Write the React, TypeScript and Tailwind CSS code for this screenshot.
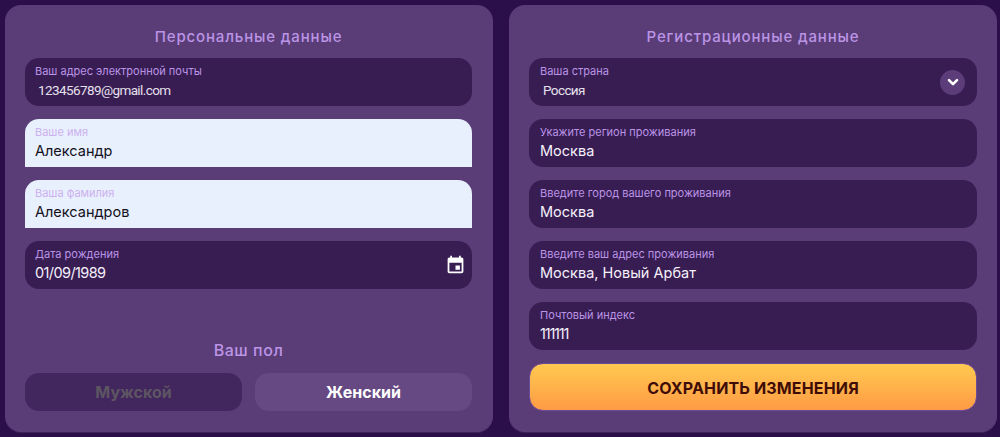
import React from "react";

function Field({ label, value, light, mono, right, valueClass, wide }: { label: string; value: string; light?: boolean; mono?: boolean; right?: React.ReactNode; valueClass?: string; wide?: boolean }) {
  return (
    <div
      className={
        "relative h-[48px] shrink-0 " + (wide ? "px-[11px] " : "px-[10px] ") +
        (light ? "bg-[#e8f0fe] rounded-t-[14px] " : "bg-[#381d53] rounded-[14px] ")
      }
    >
      <div className={"pt-[5px] text-[11px] leading-[16px] " + (light ? "text-[#cdb0ee]" : "text-[#bb94e6]")}>{label}</div>
      <div
        className={
          "mt-[1px] leading-[20px] whitespace-nowrap " +
          (mono
            ? "pl-[3px] text-[13.5px] tracking-[-0.6px] text-[#e6e0ec] font-['Roboto',sans-serif]"
            : "text-[14.5px] " + (valueClass ?? "") + " " + (light ? "text-[#14101c]" : "text-[#f5f0fa]"))
        }
      >
        {value}
      </div>
      {right}
    </div>
  );
}

function CalendarIcon() {
  return (
    <svg className="absolute right-[6px] top-[13px]" width="21" height="21" viewBox="0 0 24 24" fill="#ffffff">
      <path d="M19 4h-1V2h-2v2H8V2H6v2H5c-1.11 0-2 .9-2 2v14c0 1.1.89 2 2 2h14c1.1 0 2-.9 2-2V6c0-1.1-.9-2-2-2zm0 16H5V10h14v10zm-7-7h5v5h-5z" />
    </svg>
  );
}

function Chevron() {
  return (
    <div className="absolute right-[12px] top-[12px] flex h-[25px] w-[25px] items-center justify-center rounded-full bg-[#5c3d7a]">
      <svg width="12" height="9" viewBox="0 0 12 9" fill="none" stroke="#ffffff" strokeWidth="2.6" strokeLinecap="round" strokeLinejoin="round">
        <path d="M2 2.2 L6 6.2 L10 2.2" />
      </svg>
    </div>
  );
}

function Title({ children, cls }: { children: React.ReactNode; cls: string }) {
  return <div className={"h-[53px] pt-[21px] text-center text-[15px] leading-[22px] font-medium text-[#bb94e6] " + cls}>{children}</div>;
}

export default function App() {
  return (
    <div className="flex h-[437px] w-[1000px] gap-[16px] overflow-hidden bg-[#2a0f4a] p-[5px] font-['Inter',sans-serif]">
      <div className="flex w-[488px] shrink-0 flex-col rounded-[16px] bg-[#5a3d77] pl-[20px] pr-[21px] pb-[21px] shadow-[0_1px_0_#3d2358]">
        <Title cls="tracking-[0.85px]">Персональные данные</Title>
        <div className="flex flex-col gap-[13px]">
          <Field label="Ваш адрес электронной почты" value="123456789@gmail.com" mono />
          <Field label="Ваше имя" value="Александр" light />
          <Field label="Ваша фамилия" value="Александров" light />
          <Field label="Дата рождения" value="01/09/1989" valueClass="tracking-[-0.6px]" right={<CalendarIcon />} />
        </div>
        <div className="mt-auto text-center text-[16px] leading-[22px] tracking-[0.55px] font-medium text-[#bb94e6]">Ваш пол</div>
        <div className="mt-[12px] flex gap-[13px]">
          <div className="flex h-[38px] flex-1 items-center justify-center rounded-[14px] bg-[#42265e] text-[16px] font-bold text-[#5d5562]">Мужской</div>
          <div className="flex h-[38px] flex-1 items-center justify-center rounded-[14px] bg-[#664882] text-[16px] font-bold text-white">Женский</div>
        </div>
      </div>
      <div className="flex w-[488px] shrink-0 flex-col rounded-[16px] bg-[#5a3d77] pl-[20px] pr-[20px] shadow-[0_1px_0_#3d2358]">
        <Title cls="tracking-[0.85px]">Регистрационные данные</Title>
        <div className="flex flex-col gap-[13px]">
          <Field wide label="Ваша страна" value="Россия" mono right={<Chevron />} />
          <Field wide label="Укажите регион проживания" value="Москва" />
          <Field wide label="Введите город вашего проживания" value="Москва" />
          <Field wide label="Введите ваш адрес проживания" value="Москва, Новый Арбат" />
          <Field wide label="Почтовый индекс" value="111111" valueClass="tracking-[-1.2px]" />
          <div className="flex h-[48px] items-center justify-center rounded-[14px] border border-[#6a4a9a] bg-gradient-to-b from-[#ffc94f] to-[#ff9a45] pt-[2px] text-[16px] font-bold tracking-[0.15px] text-[#3f0d08]">
            СОХРАНИТЬ ИЗМЕНЕНИЯ
          </div>
        </div>
      </div>
    </div>
  );
}
